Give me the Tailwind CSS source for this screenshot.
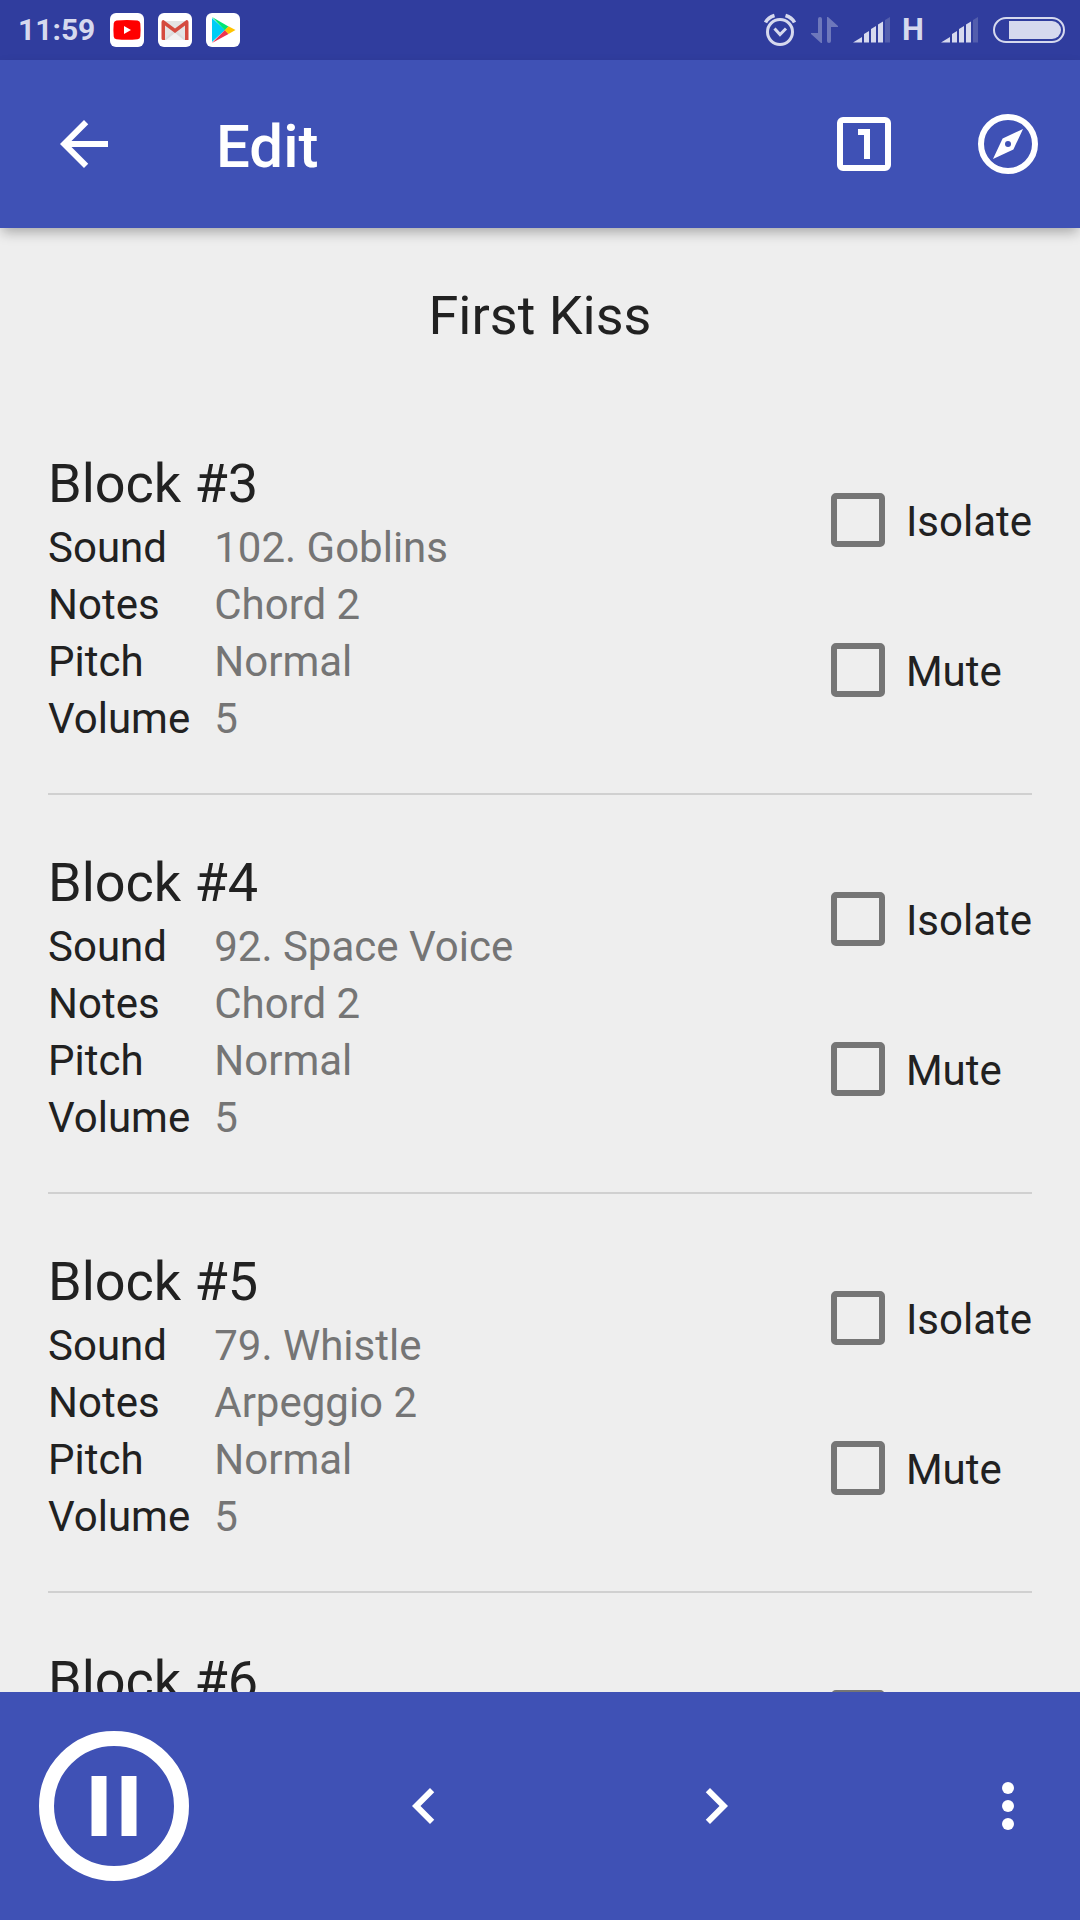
<!doctype html>
<html lang="en">
<head>
  <meta charset="UTF-8">
  <title>Edit</title>
  <meta name="viewport" content="width=device-width, initial-scale=1.0">
  <script src="https://cdn.jsdelivr.net/npm/@tailwindcss/browser@4"></script>
</head>

<body class="flex h-screen flex-col bg-[#eeeeee] font-[Roboto,sans-serif] text-[#212121]">

  <!-- status bar -->
  <div class="flex h-[60px] shrink-0 items-center justify-between bg-[#303d9e] pl-[18px] pr-[15px] text-[#d6d9ee]">
    <div class="flex items-center gap-[14px]">
      <span class="mr-px text-[30px] font-bold leading-8">11:59</span>

      <svg class="size-[34px]" viewBox="0 0 34 34">
        <rect width="34" height="34" rx="6" fill="#fff"/>
        <path d="M6.500 7.500Q17 6.300 27.500 7.500Q30 7.800 30.300 10.500Q30.900 17 30.300 23.500Q30 26.100 27.500 26.300Q17 27.300 6.500 26.300Q4 26.100 3.700 23.500Q3.100 17 3.700 10.500Q4 7.800 6.500 7.500Z" fill="#f00"/>
        <path d="M14 13v8l7-4z" fill="#fff"/>
      </svg>

      <svg class="size-[34px]" viewBox="0 0 34 34">
        <rect width="34" height="34" rx="6" fill="#fff"/>
        <path d="M6 8h22v19H6z" fill="#e4e4e4"/>
        <path d="M6 27l11-11 11 11z" fill="#dcdcdc"/>
        <path d="M8 27l9-7 9 7z" fill="#f2f2f2"/>
        <path d="M3.500 9Q3.500 7 5.500 7L17 15.500 28.500 7Q30.500 7 30.500 9V27H27V12.500L17 20 7 12.500V27H5Q3.500 27 3.500 25.500Z" fill="#d54b3f"/>
      </svg>

      <svg class="size-[34px]" viewBox="0 0 34 34">
        <rect width="34" height="34" rx="6" fill="#fff"/>
        <path d="M6 5v24l13-12z" fill="#00cdf5"/>
        <path d="M6 4l16.500 9.500L19 17.500z" fill="#00e676"/>
        <path d="M6 30l16.500-9L19 17z" fill="#ee3450"/>
        <path d="M22.500 13.300L29.500 17l-7 4-3.800-3.800z" fill="#ffc400"/>
      </svg>
    </div>

    <div class="flex items-center">
      <!-- alarm -->
      <svg class="mr-[15px] h-[34px] w-8" viewBox="0 0 32 34" fill="none" stroke="currentColor">
        <circle cx="16" cy="19" r="12.500" stroke-width="3"/>
        <path d="M10.500 15.500l5.500 6 6-6" stroke-width="3"/>
        <path d="M1.500 9.500Q4 4.500 10.500 2.500M30.500 9.500Q28 4.500 21.500 2.500" stroke-width="3.500"/>
      </svg>
      <!-- data arrows -->
      <svg class="mr-[15px] h-[26px] w-[27px] text-[#6e78bb]" viewBox="0 0 27 26" fill="currentColor">
        <path d="M7 2q0-2 2-2t2 2v24h-1L0 17v-1h7z"/>
        <path d="M20 24q0 2-2 2t-2-2V0h1l10 9v1h-7z"/>
      </svg>
      <!-- first sim -->
      <svg class="mr-3 h-[26px] w-[37px]" viewBox="0 0 37 26" fill="currentColor">
        <path d="M0 25.500L9 20v5.500zM11 17l5-3v11.500h-5zM18 12l5-3v16.500h-5zM25 7.500l5-3v21h-5z"/>
        <path d="M32 3l5-3v25.500h-5z" fill="#535ead"/>
      </svg>
      <span class="mr-[17px] text-[31px] font-bold leading-8">H</span>
      <!-- second sim -->
      <svg class="mr-[15px] h-[26px] w-[37px]" viewBox="0 0 37 26" fill="currentColor">
        <path d="M0 25.500L9 20v5.500zM11 17l5-3v11.500h-5zM18 12l5-3v16.500h-5zM25 7.500l5-3v21h-5z"/>
        <path d="M32 3l5-3v25.500h-5z" fill="#535ead"/>
      </svg>
      <!-- battery -->
      <svg class="h-[26px] w-[72px]" viewBox="0 0 72 26">
        <rect x="1" y="1" width="70" height="24" rx="12" fill="none" stroke="currentColor" stroke-width="2"/>
        <path d="M16 4h43a9 9 0 0 1 0 18H16z" fill="currentColor"/>
      </svg>
    </div>
  </div>

  <!-- app bar -->
  <header class="z-10 flex h-[168px] shrink-0 items-center bg-[#3f51b5] pl-12 pr-9 text-white shadow-[0_6px_12px_-2px_rgba(0,0,0,0.3)]">
    <button type="button" aria-label="Back">
      <svg class="size-[72px]" viewBox="0 0 24 24" fill="currentColor"><path d="M20 11H7.830l5.590-5.590L12 4l-8 8 8 8 1.410-1.410L7.830 13H20z"/></svg>
    </button>
    <h1 class="ml-24 flex-1 pt-1.5 text-[60px] font-medium leading-[72px]">Edit</h1>
    <div class="flex gap-[72px]">
      <button type="button" aria-label="Show one">
        <svg class="size-[72px]" viewBox="0 0 24 24" fill="none" stroke="currentColor" stroke-width="2"><rect x="4" y="4" width="16" height="16" rx="1"/><path d="M10 8h3v9"/></svg>
      </button>
      <button type="button" aria-label="Explore">
        <svg class="size-[72px]" viewBox="0 0 24 24"><circle cx="12" cy="12" r="9" fill="none" stroke="currentColor" stroke-width="2"/><path d="M17 7l-6.800 3.200L7 17l6.800-3.200z" fill="currentColor"/><circle cx="12" cy="12" r="1" fill="#3f51b5"/></svg>
      </button>
    </div>
  </header>

  <main class="min-h-0 flex-1 overflow-y-auto px-12 [scrollbar-width:none]">
    <h2 class="pb-12 pt-14 text-center text-[54px] leading-[64px]">First Kiss</h2>

    <section class="flex justify-between border-b-2 border-[#d0d0d0]">
      <div class="pb-[46px] pt-14">
        <h3 class="mb-[3px] text-[54px] leading-[64px]">Block #3</h3>
        <dl class="grid grid-cols-[auto_1fr] gap-x-6 text-[42px] leading-[57px]">
          <dt>Sound</dt><dd class="text-[#757575]">102. Goblins</dd>
          <dt>Notes</dt><dd class="text-[#757575]">Chord 2</dd>
          <dt>Pitch</dt><dd class="text-[#757575]">Normal</dd>
          <dt>Volume</dt><dd class="text-[#757575]">5</dd>
        </dl>
      </div>
      <div class="flex flex-col justify-center gap-24 text-[42px] leading-[50px]">
        <label class="flex items-center gap-[21px]"><input type="checkbox" class="size-[54px] appearance-none rounded-[5px] border-6 border-[#757575] checked:bg-[#757575]"><span class="pt-1">Isolate</span></label>
        <label class="flex items-center gap-[21px]"><input type="checkbox" class="size-[54px] appearance-none rounded-[5px] border-6 border-[#757575] checked:bg-[#757575]"><span class="pt-1">Mute</span></label>
      </div>
    </section>

    <section class="flex justify-between border-b-2 border-[#d0d0d0]">
      <div class="pb-[46px] pt-14">
        <h3 class="mb-[3px] text-[54px] leading-[64px]">Block #4</h3>
        <dl class="grid grid-cols-[auto_1fr] gap-x-6 text-[42px] leading-[57px]">
          <dt>Sound</dt><dd class="text-[#757575]">92. Space Voice</dd>
          <dt>Notes</dt><dd class="text-[#757575]">Chord 2</dd>
          <dt>Pitch</dt><dd class="text-[#757575]">Normal</dd>
          <dt>Volume</dt><dd class="text-[#757575]">5</dd>
        </dl>
      </div>
      <div class="flex flex-col justify-center gap-24 text-[42px] leading-[50px]">
        <label class="flex items-center gap-[21px]"><input type="checkbox" class="size-[54px] appearance-none rounded-[5px] border-6 border-[#757575] checked:bg-[#757575]"><span class="pt-1">Isolate</span></label>
        <label class="flex items-center gap-[21px]"><input type="checkbox" class="size-[54px] appearance-none rounded-[5px] border-6 border-[#757575] checked:bg-[#757575]"><span class="pt-1">Mute</span></label>
      </div>
    </section>

    <section class="flex justify-between border-b-2 border-[#d0d0d0]">
      <div class="pb-[46px] pt-14">
        <h3 class="mb-[3px] text-[54px] leading-[64px]">Block #5</h3>
        <dl class="grid grid-cols-[auto_1fr] gap-x-6 text-[42px] leading-[57px]">
          <dt>Sound</dt><dd class="text-[#757575]">79. Whistle</dd>
          <dt>Notes</dt><dd class="text-[#757575]">Arpeggio 2</dd>
          <dt>Pitch</dt><dd class="text-[#757575]">Normal</dd>
          <dt>Volume</dt><dd class="text-[#757575]">5</dd>
        </dl>
      </div>
      <div class="flex flex-col justify-center gap-24 text-[42px] leading-[50px]">
        <label class="flex items-center gap-[21px]"><input type="checkbox" class="size-[54px] appearance-none rounded-[5px] border-6 border-[#757575] checked:bg-[#757575]"><span class="pt-1">Isolate</span></label>
        <label class="flex items-center gap-[21px]"><input type="checkbox" class="size-[54px] appearance-none rounded-[5px] border-6 border-[#757575] checked:bg-[#757575]"><span class="pt-1">Mute</span></label>
      </div>
    </section>

    <section class="flex min-h-[397px] justify-between">
      <div class="pt-14">
        <h3 class="mb-[3px] text-[54px] leading-[64px]">Block #6</h3>
      </div>
      <div class="flex flex-col justify-center gap-24 text-[42px] leading-[50px]">
        <label class="flex items-center gap-[21px]"><input type="checkbox" class="size-[54px] appearance-none rounded-[5px] border-6 border-[#757575] checked:bg-[#757575]"><span class="pt-1">Isolate</span></label>
        <label class="flex items-center gap-[21px]"><input type="checkbox" class="size-[54px] appearance-none rounded-[5px] border-6 border-[#757575] checked:bg-[#757575]"><span class="pt-1">Mute</span></label>
      </div>
    </section>
  </main>

  <!-- player controls -->
  <footer class="flex h-[228px] shrink-0 items-center bg-[#3f51b5] pl-6 pr-9 text-white">
    <button type="button" aria-label="Pause">
      <svg class="size-[180px]" viewBox="0 0 24 24"><circle cx="12" cy="12" r="9" fill="none" stroke="currentColor" stroke-width="2"/><path d="M9 8h2v8H9zM13 8h2v8h-2z" fill="currentColor"/></svg>
    </button>
    <div class="ml-[184px] flex flex-1 justify-between">
      <button type="button" aria-label="Previous">
        <svg class="size-[72px]" viewBox="0 0 24 24" fill="currentColor"><path d="M15.410 7.410L14 6l-6 6 6 6 1.410-1.410L10.830 12z"/></svg>
      </button>
      <button type="button" aria-label="Next">
        <svg class="size-[72px]" viewBox="0 0 24 24" fill="currentColor"><path d="M10 6L8.590 7.410 13.170 12l-4.580 4.590L10 18l6-6z"/></svg>
      </button>
      <button type="button" aria-label="More">
        <svg class="size-[72px]" viewBox="0 0 24 24" fill="currentColor"><circle cx="12" cy="6" r="2"/><circle cx="12" cy="12" r="2"/><circle cx="12" cy="18" r="2"/></svg>
      </button>
    </div>
  </footer>

</body>
</html>
